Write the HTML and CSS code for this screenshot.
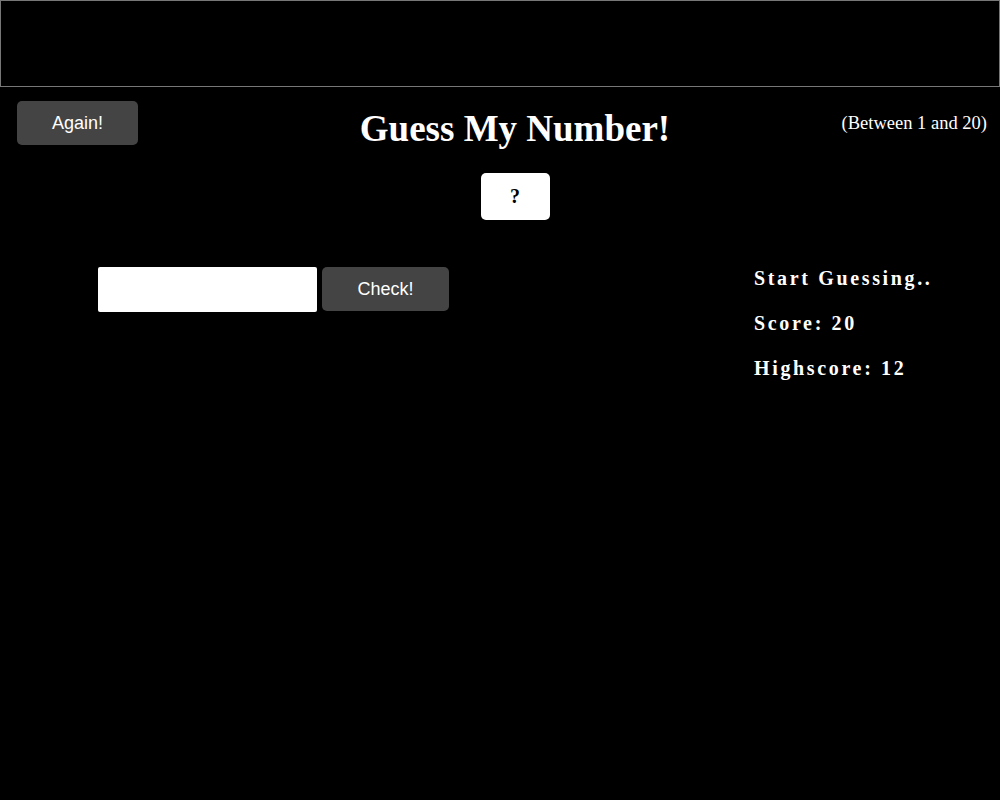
FILE: index.html
```html
<!DOCTYPE html>
<html lang="en">
<head>
<meta charset="utf-8">
<title>Guess My Number!</title>
<link rel="stylesheet" href="styles.css">
</head>
<body>
<header class="bar"></header>
<section class="top">
  <button class="btn again">Again!</button>
  <h1 class="title">Guess My Number!</h1>
  <p class="range">(Between 1 and 20)</p>
</section>
<div class="secret-wrap">
  <div class="secret">?</div>
</div>
<main class="game">
  <div class="guess">
    <input class="guess-input" type="number">
    <button class="btn check">Check!</button>
  </div>
  <div class="stats">
    <p class="stat">Start Guessing..</p>
    <p class="stat">Score: <span>20</span></p>
    <p class="stat">Highscore: <span>12</span></p>
  </div>
</main>
</body>
</html>
```
FILE: styles.css
```css
html, body {
  margin: 0;
  padding: 0;
  background: #000;
  color: #fff;
  font-family: "Liberation Serif", "Times New Roman", serif;
}
.bar {
  box-sizing: border-box;
  height: 87px;
  border: 1px solid #777;
}
.top {
  display: grid;
  grid-template-columns: 326px 1fr 300px;
  height: 44px;
  padding: 14px 13px 0 17px;
}
.btn {
  box-sizing: border-box;
  background: #444;
  color: #fff;
  border: none;
  border-radius: 5px;
  font-family: "Liberation Sans", Arial, sans-serif;
  font-size: 18px;
  cursor: pointer;
}
.again {
  width: 121px;
  height: 44px;
}
.title {
  margin: 6px 0 0;
  font-size: 37px;
  line-height: 44px;
  font-weight: bold;
  text-align: center;
  white-space: nowrap;
}
.range {
  margin: 11.5px 0 0;
  font-size: 18.5px;
  text-align: right;
}
.secret-wrap {
  display: flex;
  justify-content: center;
  padding-left: 30px;
  margin-top: 28px;
}
.secret {
  width: 69px;
  height: 47px;
  box-sizing: border-box;
  background: #fff;
  color: #000;
  border-radius: 5px;
  display: flex;
  align-items: center;
  justify-content: center;
  font-size: 20px;
  font-weight: bold;
}
.game {
  display: flex;
  justify-content: space-between;
  align-items: flex-start;
  margin-top: 47px;
  padding-left: 98px;
}
.guess {
  display: flex;
  align-items: flex-start;
  gap: 5px;
}
.guess-input {
  box-sizing: border-box;
  width: 219px;
  height: 45px;
  border: none;
  border-radius: 2px;
  background: #fff;
  margin: 0;
}
.check {
  width: 127px;
  height: 44px;
}
.stats {
  width: 246px;
  display: flex;
  flex-direction: column;
  gap: 21px;
  margin-top: -1px;
}
.stat {
  margin: 0;
  font-size: 20px;
  line-height: 24px;
  font-weight: bold;
  letter-spacing: 2.65px;
}
```
